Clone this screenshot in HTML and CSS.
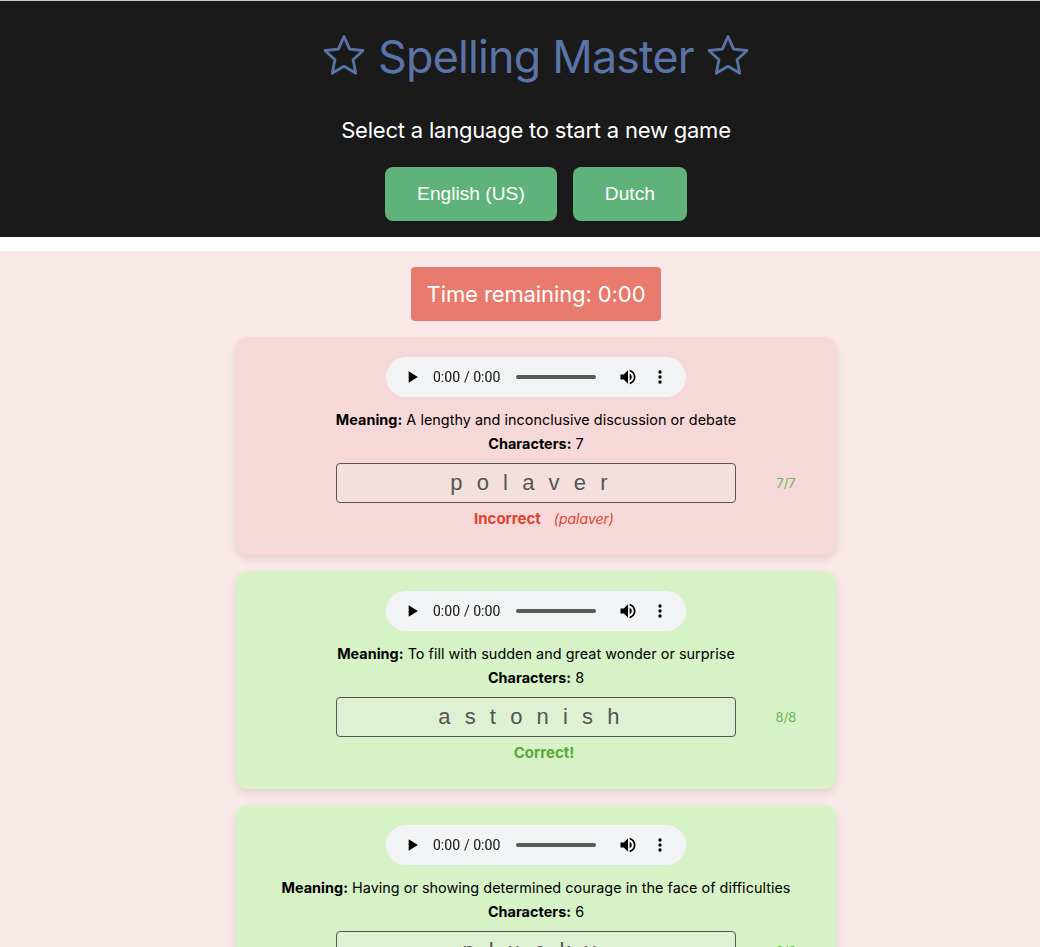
FILE: index.html
```html
<!DOCTYPE html>
<html>
  <head>
    <meta charset="utf-8">
    <meta name="viewport" content="width=device-width, initial-scale=1">
    <title>Spelling Master</title>
    <link rel="stylesheet" href="styles.css">
  </head>
  <body>
    <header class="header">
      <h1 class="title">
        <svg class="star" viewBox="0 0 42 42"><path d="M21 2.5l5.6 12.6 13.4 1.4-10 9.2 2.8 13.5L21 32.3 9.2 39.2 12 25.7 2 16.5l13.4-1.4z"/></svg>
        <span>Spelling Master</span>
        <svg class="star" viewBox="0 0 42 42"><path d="M21 2.5l5.6 12.6 13.4 1.4-10 9.2 2.8 13.5L21 32.3 9.2 39.2 12 25.7 2 16.5l13.4-1.4z"/></svg>
      </h1>
      <p class="subtitle">Select a language to start a new game</p>
      <div class="languages">
        <button class="language">English (US)</button>
        <button class="language">Dutch</button>
      </div>
    </header>
    <main class="game">
      <div class="timer">Time remaining: 0:00</div>

      <section class="card wrong">
        <audio controls src="data:audio/wav;base64,UklGRiwAAABXQVZFZm10IBAAAAABAAEAQB8AAEAfAAABAAgAZGF0YQgAAACAgICAgICAgA=="></audio>
        <p class="line"><b>Meaning:</b> A lengthy and inconclusive discussion or debate</p>
        <p class="line"><b>Characters:</b> 7</p>
        <div class="answer">
          <input class="word" type="text" value="polaver" disabled>
          <span class="count">7/7</span>
        </div>
        <p class="result"><b>Incorrect</b><i class="solution">(palaver)</i></p>
      </section>

      <section class="card right">
        <audio controls src="data:audio/wav;base64,UklGRiwAAABXQVZFZm10IBAAAAABAAEAQB8AAEAfAAABAAgAZGF0YQgAAACAgICAgICAgA=="></audio>
        <p class="line"><b>Meaning:</b> To fill with sudden and great wonder or surprise</p>
        <p class="line"><b>Characters:</b> 8</p>
        <div class="answer">
          <input class="word" type="text" value="astonish" disabled>
          <span class="count">8/8</span>
        </div>
        <p class="result"><b>Correct!</b></p>
      </section>

      <section class="card right">
        <audio controls src="data:audio/wav;base64,UklGRiwAAABXQVZFZm10IBAAAAABAAEAQB8AAEAfAAABAAgAZGF0YQgAAACAgICAgICAgA=="></audio>
        <p class="line"><b>Meaning:</b> Having or showing determined courage in the face of difficulties</p>
        <p class="line"><b>Characters:</b> 6</p>
        <div class="answer">
          <input class="word" type="text" value="plucky" disabled>
          <span class="count">6/6</span>
        </div>
        <p class="result"><b>Correct!</b></p>
      </section>
    </main>
  </body>
</html>
```

FILE: styles.css
```css
html {
  overflow: hidden;
}

body {
  margin: 0;
  width: 1072px;
  font-family: Inter, "Liberation Sans", sans-serif;
  background: #fff;
}

.header {
  background: #1a1a1a;
  border-top: 1px solid #ccc;
  padding: 24px 0 16px;
  margin-bottom: 14px;
  text-align: center;
}

.title {
  margin: 0;
  display: flex;
  justify-content: center;
  align-items: center;
  gap: 13px;
  font-size: 44.8px;
  line-height: 64px;
  font-weight: 400;
  letter-spacing: -0.8px;
  color: #5a74a8;
}

.star {
  width: 42px;
  height: 42px;
  margin-bottom: 4px;
  fill: none;
  stroke: currentColor;
  stroke-width: 2.8;
  stroke-linejoin: round;
}

.subtitle {
  margin: 28px 0 23px;
  font-size: 22px;
  line-height: 27px;
  letter-spacing: -0.21px;
  color: #fff;
}

.languages {
  display: flex;
  justify-content: center;
  gap: 16px;
}

.language {
  height: 54px;
  padding: 0 32px;
  border: 0;
  border-radius: 8px;
  background: #5fb27a;
  color: #fff;
  font-family: "Liberation Sans", sans-serif;
  font-size: 19.2px;
}

.game {
  background: #f9e8e8;
  padding: 16px 0;
  display: flex;
  flex-direction: column;
  align-items: center;
  gap: 16px;
}

.timer {
  padding: 0 16px;
  line-height: 54px;
  border-radius: 4px;
  background: #e87a6e;
  color: #fff;
  font-size: 22px;
  letter-spacing: -0.1px;
}

.card {
  width: 600px;
  box-sizing: border-box;
  padding: 20px 0 26px;
  border-radius: 12px;
  box-shadow: 0 4px 8px rgba(0, 0, 0, 0.1);
  display: flex;
  flex-direction: column;
  align-items: center;
}

.card.wrong {
  background: #f6d8d8;
}

.card.right {
  background: #d7f2c6;
}

audio {
  display: block;
  width: 300px;
  height: 40px;
  margin-bottom: 11px;
}

audio::-webkit-media-controls-panel {
  filter: contrast(3);
}

.line {
  margin: 0;
  font-size: 14.4px;
  line-height: 24px;
  letter-spacing: 0.03px;
  color: #000;
}

.answer {
  display: grid;
  grid-template-columns: 100px 400px 100px;
  align-items: center;
  margin-top: 7px;
}

.word {
  grid-column: 2;
  box-sizing: border-box;
  width: 400px;
  height: 40px;
  border: 1px solid #555;
  border-radius: 4px;
  background: rgba(238, 238, 238, 0.3);
  color: #555;
  font-family: "Liberation Sans", sans-serif;
  font-size: 22px;
  letter-spacing: 14.2px;
  text-align: center;
}

.count {
  text-align: center;
  font-size: 13px;
  color: #6cb85a;
}

.result {
  margin: 6px 0 0;
  padding-left: 16px;
  font-size: 15px;
  line-height: 20px;
}

.wrong .result {
  color: #d9442f;
}

.right .result {
  color: #5aa83a;
}

.solution {
  margin-left: 13px;
  font-size: 14px;
}
```
